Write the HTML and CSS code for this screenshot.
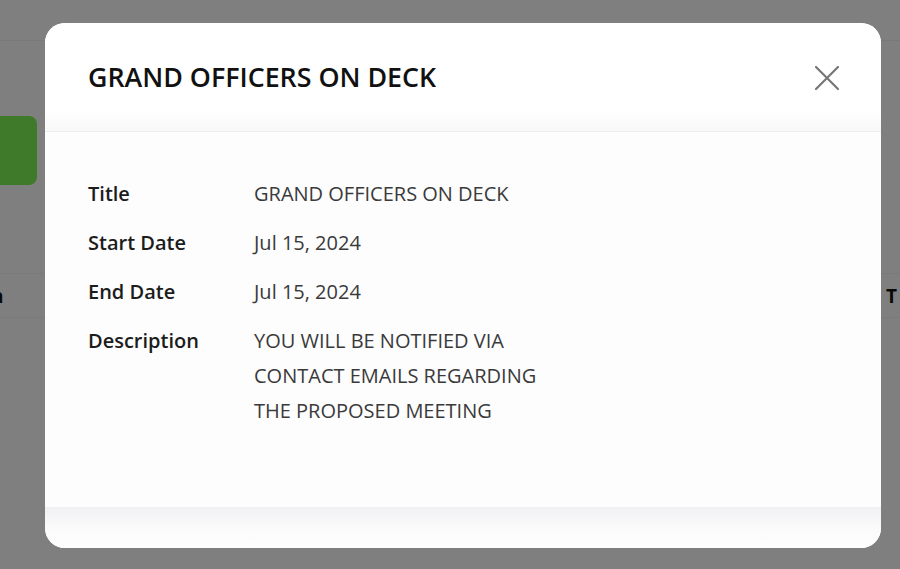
FILE: index.html
```html
<!DOCTYPE html>
<html lang="en">
<head>
<meta charset="utf-8">
<title>Event details</title>
<link rel="stylesheet" href="styles.css">
</head>
<body>
  <div class="page">
    <div class="topbar"></div>
    <div class="toolbar">
      <button class="add-btn" type="button"></button>
    </div>
    <div class="table-head">
      <span class="th-left">n</span>
      <span class="th-right">T</span>
    </div>
  </div>

  <div class="overlay">
    <div class="modal" role="dialog" aria-labelledby="modal-title">
      <div class="modal-header">
        <h2 id="modal-title" class="modal-title">GRAND OFFICERS ON DECK</h2>
        <button class="close-btn" type="button" aria-label="Close">
          <svg width="24" height="24" viewBox="0 0 24 24" aria-hidden="true">
            <path d="M1 1 L23 23 M23 1 L1 23" stroke="#777" stroke-width="2.2" stroke-linecap="round" fill="none"/>
          </svg>
        </button>
      </div>
      <div class="modal-body">
        <dl class="details">
          <dt>Title</dt>
          <dd>GRAND OFFICERS ON DECK</dd>
          <dt>Start Date</dt>
          <dd>Jul 15, 2024</dd>
          <dt>End Date</dt>
          <dd>Jul 15, 2024</dd>
          <dt>Description</dt>
          <dd class="desc">YOU WILL BE NOTIFIED VIA CONTACT EMAILS REGARDING THE PROPOSED MEETING</dd>
        </dl>
      </div>
      <div class="modal-footer"></div>
    </div>
  </div>
</body>
</html>
```
FILE: styles.css
```css
* { box-sizing: border-box; }

html, body {
  margin: 0;
  height: 100%;
}

body {
  font-family: "Open Sans", "Noto Sans", sans-serif;
  background: #ffffff;
  overflow: hidden;
}

.page {
  height: 100%;
}

.topbar {
  height: 41px;
  border-bottom: 1px solid #f2f2f2;
}

.toolbar {
  padding-top: 75px;
  height: 232px;
}

.add-btn {
  display: block;
  width: 37px;
  height: 69px;
  margin: 0;
  border: 0;
  border-radius: 0 8px 8px 0;
  background: #7ef457;
}

.table-head {
  height: 45px;
  border-top: 1px solid #f4f4f4;
  border-bottom: 1px solid #f4f4f4;
  display: flex;
  align-items: center;
  justify-content: space-between;
  font-size: 19px;
  font-weight: 700;
  color: #111;
}

.th-left { margin-left: -9px; }
.th-right { margin-right: 3px; }

.overlay {
  position: fixed;
  inset: 0;
  background: rgba(0, 0, 0, 0.5);
  display: flex;
  align-items: flex-start;
  padding: 23px 19px 0 45px;
}

.modal {
  width: 836px;
  height: 525px;
  background: #ffffff;
  border-radius: 20px;
  overflow: hidden;
  display: flex;
  flex-direction: column;
}

.modal-header {
  height: 109px;
  flex: none;
  display: flex;
  align-items: flex-start;
  justify-content: space-between;
  padding: 37px 42px 0 43px;
  border-bottom: 1px solid #ececec;
  background: linear-gradient(#ffffff 80%, #f8f8f9 100%);
}

.modal-title {
  margin: 0;
  font-size: 26.8px;
  line-height: 34px;
  font-weight: 600;
  color: #111111;
}

.close-btn {
  margin: 6px 0 0;
  padding: 0;
  border: 0;
  background: none;
  width: 24px;
  height: 24px;
  cursor: pointer;
}

.close-btn svg { display: block; }

.modal-body {
  flex: 1;
  background: #fdfdfe;
  padding: 44px 43px 0;
}

.details {
  margin: 0;
  display: grid;
  grid-template-columns: 166px 300px;
  row-gap: 14px;
  font-size: 20px;
  line-height: 35px;
}

.details dt {
  font-weight: 600;
  color: #1c1c1c;
}

.details dd {
  margin: 0;
  color: #3a3a3a;
}

.modal-footer {
  height: 41px;
  flex: none;
  background: linear-gradient(#f1f0f2, #fbfbfc 55%, #fefefe);
}
```
